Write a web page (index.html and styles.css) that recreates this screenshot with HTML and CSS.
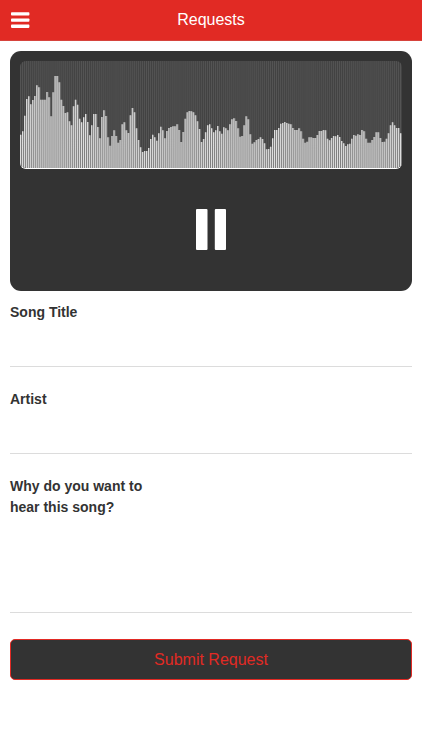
FILE: index.html
```html
<!DOCTYPE html>
<html lang="en">
<head>
<meta charset="utf-8">
<meta name="viewport" content="width=device-width, initial-scale=1">
<title>Requests</title>
<link rel="stylesheet" href="styles.css">
</head>
<body>
<header class="bar">
  <button class="menu" type="button" aria-label="Menu">
    <svg viewBox="0 0 20 16" width="20" height="16" aria-hidden="true"><rect x="1" y="0.300" width="18.400" height="3.300" rx="0.800"/><rect x="1" y="6.500" width="18.400" height="3.300" rx="0.800"/><rect x="1" y="12.600" width="18.400" height="3.300" rx="0.800"/></svg>
  </button>
  <h1 class="title">Requests</h1>
</header>
<main class="content">
  <section class="player" aria-label="Player">
    <svg class="wave" viewBox="0 0 376 321" preserveAspectRatio="none" aria-hidden="true">
      <path class="wave-stripes" id="stripes"/>
      <path class="wave-area" id="area"/>
      <path class="wave-bars" id="bars"/>
    </svg>
    <button class="pause" type="button" aria-label="Pause">
      <svg viewBox="0 0 30 42" width="30" height="42" aria-hidden="true"><rect x="0" y="1" width="11.500" height="41" rx="1"/><rect x="18.800" y="1" width="11.200" height="41" rx="1"/></svg>
    </button>
  </section>
  <form class="form">
    <div class="field">
      <label for="song">Song Title</label>
      <input id="song" type="text">
    </div>
    <div class="field">
      <label for="artist">Artist</label>
      <input id="artist" type="text">
    </div>
    <div class="field">
      <label for="reason">Why do you want to hear this song?</label>
      <textarea id="reason"></textarea>
    </div>
    <button class="submit" type="submit">Submit Request</button>
  </form>
</main>
<script src="wave.js"></script>
</body>
</html>
```
FILE: styles.css
```css
* {
  box-sizing: border-box;
}

body {
  margin: 0;
  background: #fff;
  color: #333;
  font: 14px/21px "Liberation Sans", Arial, sans-serif;
}

button,
input,
textarea {
  margin: 0;
  padding: 0;
  border: 0;
  background: none;
  color: inherit;
  font: inherit;
}

.bar {
  display: grid;
  grid-template-columns: 40px 1fr 40px;
  align-items: center;
  height: 41px;
  border-bottom: 1px solid #d6433c;
  background: #e12a24;
  color: #fff;
}

.menu {
  display: flex;
  padding: 12px 10px;
}

.menu svg,
.pause svg {
  display: block;
  fill: #fff;
}

.title {
  margin: 0;
  padding-bottom: 2px;
  font-size: 16px;
  font-weight: 400;
  text-align: center;
}

.content {
  padding: 10px;
}

.player {
  display: flex;
  flex-direction: column;
  align-items: center;
  gap: 39px;
  padding: 10px 10px 41px;
  border-radius: 11px;
  background: #333;
}

.wave {
  width: 100%;
  height: 108px;
  border-bottom: 1px solid #fff;
  border-radius: 6px;
  background: #424242;
}

.wave-stripes {
  fill: #545454;
}

.wave-area {
  fill: #808080;
}

.wave-bars {
  fill: #dedede;
}

.form {
  display: flex;
  flex-direction: column;
  gap: 22px;
  padding-top: 11px;
}

.field {
  display: flex;
  flex-direction: column;
  border-bottom: 1px solid #dcdcdc;
}

.field label {
  width: 140px;
  font-weight: 700;
}

.field input {
  height: 43px;
}

.field textarea {
  height: 94px;
  resize: none;
}

.submit {
  height: 41px;
  margin-top: 4px;
  border: 1px solid #e12a24;
  border-radius: 5px;
  background: #333;
  color: #e12a24;
  font-size: 16px;
}
```
FILE: wave.js
```js
// Top edge of each sample, measured down to the baseline at 354.
const tops = [
  254,244,197,147,139,163,150,138,106,112,149,149,149,126,142,199,127,78,78,97,
  149,168,189,187,214,226,169,149,164,206,217,202,192,216,256,226,192,192,231,265,
  201,181,198,262,287,258,241,258,278,270,223,217,241,249,196,174,187,235,270,292,
  306,303,303,294,267,254,262,272,250,230,241,265,243,234,231,229,229,223,240,276,
  246,206,187,183,184,187,196,214,237,276,267,247,226,223,235,247,241,228,244,251,
  232,235,241,223,208,205,213,235,260,258,226,199,208,253,281,277,270,267,262,267,
  280,298,297,290,265,240,240,234,221,219,216,219,221,223,234,240,240,235,244,266,
  278,275,262,262,264,264,255,243,243,240,241,266,271,264,258,259,255,261,273,280,
  288,283,281,266,255,257,253,255,240,244,266,278,278,270,261,247,247,264,276,275,
  266,250,226,217,226,234,234,250
];
const column = (x, y, width) => `M${x} ${y}h${width}V321h${-width}z`;
const draw = (id, part) => {
  document.getElementById(id).setAttribute("d", tops.map(part).join(""));
};
draw("stripes", (top, i) => column(i * 2, 0, 1));
draw("area", (top, i) => column(i * 2, top - 33, 2));
draw("bars", (top, i) => column(i * 2, top - 33, 1));
```
